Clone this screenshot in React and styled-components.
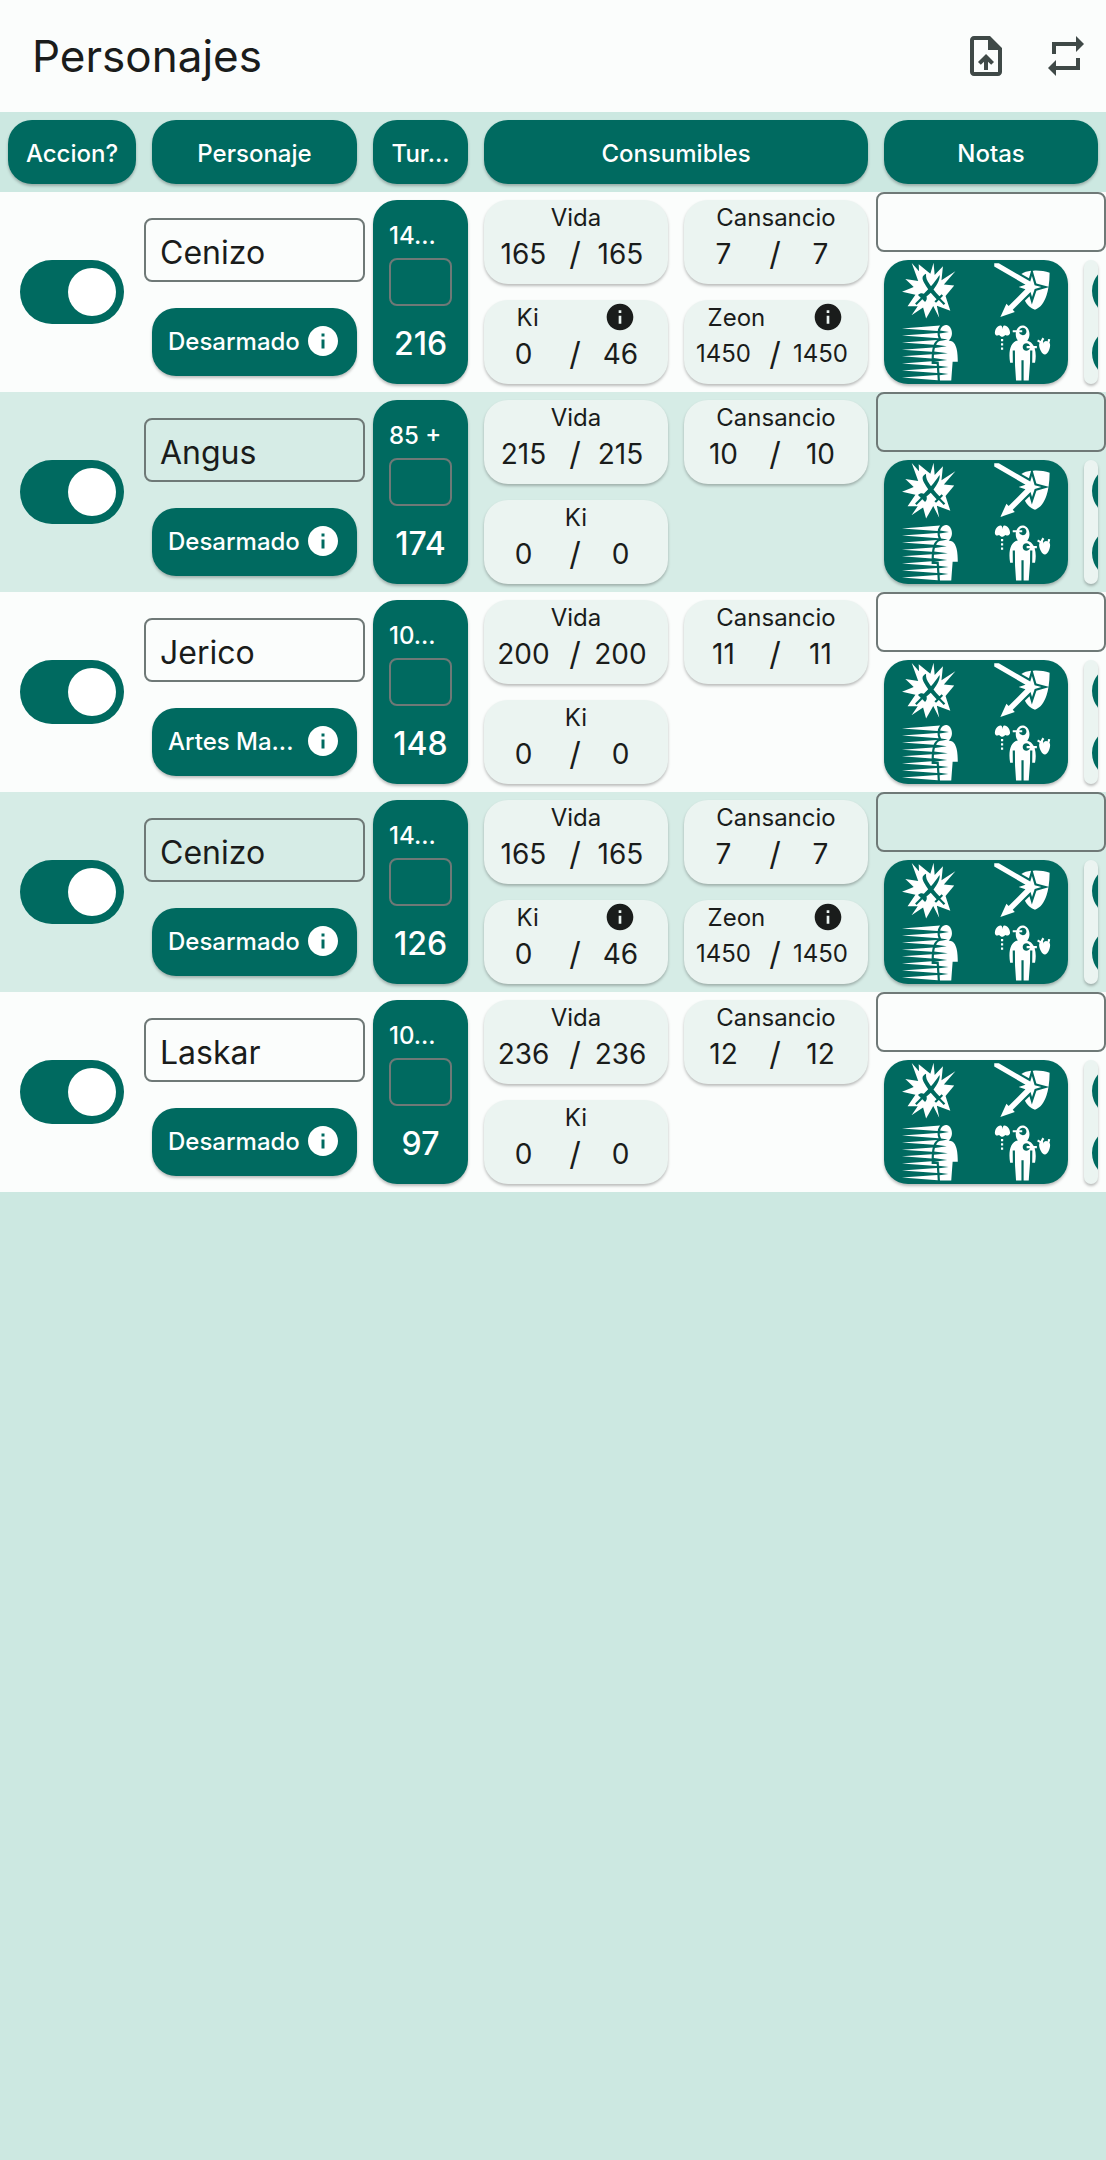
import React, { useState } from "react";
import styled, { createGlobalStyle } from "styled-components";
import { MdUploadFile, MdRepeat, MdInfo } from "react-icons/md";
import { GiSabersChoc, GiShieldReflect, GiDodging, GiAnatomy } from "react-icons/gi";

const color = {
  primary: "#006a60",
  surface: "#fbfdfc",
  background: "#cce8e1",
  stripe: "#d6ece6",
  card: "#ebf4f1",
  outline: "#6f7977",
  text: "#1a1c1b",
  icon: "#3f4947",
};

const GlobalStyle = createGlobalStyle`
  *, *::before { box-sizing: border-box; }
  body {
    margin: 0;
    min-height: 100vh;
    background: ${color.background};
    color: ${color.text};
    font-family: Inter, "Noto Sans", sans-serif;
    font-size: 24px;
    line-height: 32px;
  }
  input, button { font: inherit; color: inherit; }
`;

const TopBar = styled.header`
  display: flex;
  align-items: center;
  height: 112px;
  padding-left: 32px;
  background: ${color.surface};
`;

const Title = styled.h1`
  flex: 1;
  margin: 0;
  font-size: 44px;
  line-height: 56px;
  font-weight: 400;
`;

const BarButton = styled.button`
  display: flex;
  align-items: center;
  justify-content: center;
  width: 80px;
  height: 80px;
  padding: 0;
  border: 0;
  background: none;
  color: ${color.icon};
  font-size: 48px;
`;

const Table = styled.table`
  display: block;
`;

const Section = styled.tbody`
  display: block;
`;

const Head = styled.thead`
  display: block;
`;

const Row = styled.tr`
  display: grid;
  grid-template-columns: 144fr 221fr 111fr 400fr 230fr;
`;

const CharacterRow = styled(Row)`
  height: 200px;
  background: ${(p) => (p.$striped ? color.stripe : color.surface)};
`;

const HeadCell = styled.th`
  display: block;
  min-width: 0;
  padding: 8px;
  font-weight: 500;
`;

const Cell = styled.td`
  display: flex;
  flex-direction: column;
  justify-content: center;
  min-width: 0;
  padding: 0;
`;

const Card = styled.div`
  border-radius: 24px;
  background: ${(p) => (p.$filled ? color.primary : color.card)};
  color: ${(p) => (p.$filled ? "#fff" : color.text)};
  box-shadow: 0 2px 3px rgba(0, 0, 0, 0.26);
`;

const HeadCard = styled(Card)`
  padding: 18px 8px 14px;
  text-align: center;
  white-space: nowrap;
`;

const Switch = styled.input`
  display: flex;
  appearance: none;
  width: 104px;
  height: 64px;
  margin: 0 auto;
  padding: 8px;
  border-radius: 32px;
  background: ${color.outline};

  &::before {
    content: "";
    width: 48px;
    height: 48px;
    border-radius: 50%;
    background: #fff;
  }

  &:checked {
    justify-content: flex-end;
    background: ${color.primary};
  }
`;

const TextField = styled.input`
  display: block;
  width: 100%;
  min-width: 0;
  border: 2px solid ${color.outline};
  border-radius: 8px;
  background: transparent;
  outline: none;
`;

const NameField = styled(TextField)`
  height: 64px;
  padding: 4px 14px 0;
  font-size: 32px;
`;

const TurnField = styled(TextField)`
  height: 48px;
  padding: 0 8px;
`;

const NoteField = styled(TextField)`
  height: 60px;
  padding: 0 14px;
`;

const NameCell = styled(Cell)`
  justify-content: flex-start;
  gap: 26px;
  padding-top: 26px;
`;

const WeaponCard = styled(Card)`
  display: flex;
  align-items: center;
  justify-content: space-between;
  height: 68px;
  margin: 0 8px;
  padding: 0 16px;
  font-weight: 500;
  white-space: nowrap;
`;

const InfoButton = styled.button`
  display: flex;
  padding: 0 0 2px;
  border: 0;
  background: none;
  font-size: ${(p) => p.$size}px;
`;

const TurnCard = styled(Card)`
  display: flex;
  flex-direction: column;
  height: 184px;
  margin: 0 8px;
  padding: 20px 16px;
  font-weight: 500;
  white-space: nowrap;
`;

const TurnBase = styled.div`
  height: 38px;
`;

const TurnTotal = styled.output`
  margin-top: 18px;
  font-size: 32px;
  line-height: 40px;
  text-align: center;
`;

const Consumables = styled.div`
  display: grid;
  grid-template-columns: 1fr 1fr;
  gap: 16px;
  height: 200px;
  padding: 8px;
`;

const ConsumableCard = styled(Card)`
  height: 84px;
  padding-top: 2px;
`;

const ConsumableHead = styled.div`
  display: flex;
  align-items: center;
  justify-content: space-around;
  height: 32px;
`;

const Amounts = styled.div`
  display: grid;
  grid-template-columns: 79fr 24fr 67fr;
  align-items: center;
  height: 40px;
  padding-right: 14px;
  text-align: center;
`;

const Amount = styled.input`
  width: 100%;
  min-width: 0;
  padding: 0;
  border: 0;
  outline: none;
  background: none;
  font-size: ${(p) => (p.$small ? 24 : 28)}px;
  text-align: center;
`;

const Slash = styled.span`
  font-size: 32px;
`;

const NotesCell = styled(Cell)`
  justify-content: flex-start;
  gap: 8px;
`;

const Actions = styled.div`
  display: flex;
  gap: 16px;
  height: 124px;
  margin: 0 8px;
`;

const ActionCard = styled(Card)`
  flex: none;
  display: grid;
  grid-template-columns: 1fr 1fr;
  width: 184px;
`;

const ActionButton = styled.button`
  display: flex;
  align-items: center;
  justify-content: center;
  padding: 0;
  border: 0;
  background: none;
  font-size: 60px;
`;

const MoreCard = styled(Card)`
  flex: 1;
  display: flex;
  flex-direction: column;
  justify-content: space-around;
  min-width: 0;
  padding-left: 8px;
  overflow: hidden;
`;

const RoundButton = styled.button`
  flex: none;
  width: 52px;
  height: 52px;
  padding: 0;
  border: 0;
  border-radius: 50%;
  background: ${color.primary};
`;

const columns = ["Accion?", "Personaje", "Tur...", "Consumibles", "Notas"];

const characters = [
  { name: "Cenizo", weapon: "Desarmado", base: "14...", turn: 216, vida: 165, cansancio: 7, ki: 46, zeon: 1450 },
  { name: "Angus", weapon: "Desarmado", base: "85 +", turn: 174, vida: 215, cansancio: 10, ki: 0 },
  { name: "Jerico", weapon: "Artes Ma...", base: "10...", turn: 148, vida: 200, cansancio: 11, ki: 0 },
  { name: "Cenizo", weapon: "Desarmado", base: "14...", turn: 126, vida: 165, cansancio: 7, ki: 46, zeon: 1450 },
  { name: "Laskar", weapon: "Desarmado", base: "10...", turn: 97, vida: 236, cansancio: 12, ki: 0 },
];

const actions = [
  { label: "Atacar", Icon: GiSabersChoc },
  { label: "Parar", Icon: GiShieldReflect },
  { label: "Esquivar", Icon: GiDodging },
  { label: "Localizar", Icon: GiAnatomy },
];

function Consumable({ label, current, max, info }) {
  const [value, setValue] = useState(String(current));
  const small = String(max).length > 3;
  return (
    <ConsumableCard>
      <ConsumableHead>
        <span>{label}</span>
        {info && (
          <InfoButton $size={32} aria-label={`Detalles de ${label}`}>
            <MdInfo />
          </InfoButton>
        )}
      </ConsumableHead>
      <Amounts>
        <Amount
          $small={small}
          aria-label={`${label} actual`}
          value={value}
          onChange={(e) => setValue(e.target.value)}
        />
        <Slash>/</Slash>
        <Amount as="span" $small={small}>
          {max}
        </Amount>
      </Amounts>
    </ConsumableCard>
  );
}

function Character({ data, striped }) {
  const hasMagic = data.zeon !== undefined;
  return (
    <CharacterRow $striped={striped}>
      <Cell>
        <Switch type="checkbox" role="switch" defaultChecked aria-label={`Acción de ${data.name}`} />
      </Cell>
      <NameCell>
        <NameField aria-label="Personaje" defaultValue={data.name} />
        <WeaponCard $filled>
          <span>{data.weapon}</span>
          <InfoButton $size={36} aria-label="Detalles del arma">
            <MdInfo />
          </InfoButton>
        </WeaponCard>
      </NameCell>
      <Cell>
        <TurnCard $filled>
          <TurnBase>{data.base}</TurnBase>
          <TurnField aria-label="Tirada de turno" />
          <TurnTotal>{data.turn}</TurnTotal>
        </TurnCard>
      </Cell>
      <Cell>
        <Consumables>
          <Consumable label="Vida" current={data.vida} max={data.vida} />
          <Consumable label="Cansancio" current={data.cansancio} max={data.cansancio} />
          <Consumable label="Ki" current={0} max={data.ki} info={hasMagic} />
          {hasMagic && <Consumable label="Zeon" current={data.zeon} max={data.zeon} info />}
        </Consumables>
      </Cell>
      <NotesCell>
        <NoteField aria-label="Notas" />
        <Actions>
          <ActionCard $filled>
            {actions.map(({ label, Icon }) => (
              <ActionButton key={label} aria-label={label}>
                <Icon />
              </ActionButton>
            ))}
          </ActionCard>
          <MoreCard>
            <RoundButton aria-label="Sumar" />
            <RoundButton aria-label="Restar" />
          </MoreCard>
        </Actions>
      </NotesCell>
    </CharacterRow>
  );
}

export default function App() {
  return (
    <>
      <GlobalStyle />
      <TopBar>
        <Title>Personajes</Title>
        <BarButton aria-label="Subir archivo">
          <MdUploadFile />
        </BarButton>
        <BarButton aria-label="Repetir">
          <MdRepeat />
        </BarButton>
      </TopBar>
      <Table>
        <Head>
          <Row>
            {columns.map((label) => (
              <HeadCell key={label} scope="col">
                <HeadCard $filled>{label}</HeadCard>
              </HeadCell>
            ))}
          </Row>
        </Head>
        <Section>
          {characters.map((data, i) => (
            <Character key={i} data={data} striped={i % 2 === 1} />
          ))}
        </Section>
      </Table>
    </>
  );
}
